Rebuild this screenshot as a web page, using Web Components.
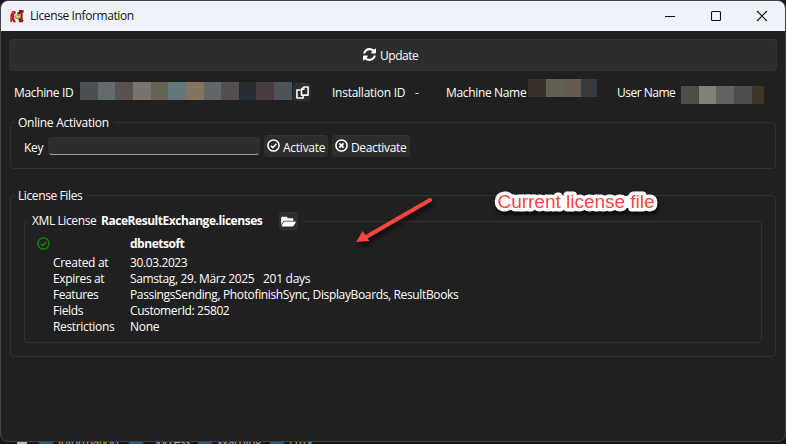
<!DOCTYPE html>
<html lang="en">
<head>
<meta charset="utf-8">
<title>License Information</title>
<style>
html,body{margin:0;padding:0;background:#191617;overflow:hidden}
body{width:786px;height:444px;font:12px/16px "Open Sans","Noto Sans",sans-serif;color:#fff}
</style>
</head>
<body>
<license-app></license-app>
<script>
const define=(name,html,ready)=>{
  const t=document.createElement('template');t.innerHTML=html;
  customElements.define(name,class extends HTMLElement{
    constructor(){super();this.attachShadow({mode:'open'}).append(t.content.cloneNode(true));}
    connectedCallback(){if(ready)ready(this,this.shadowRoot);}
  });
};

/* A label tracked so that it fills the width given in "w". */
define('ui-text',`<style>:host{display:block;flex:none;white-space:nowrap;height:16px;line-height:18px;font-variant-ligatures:none}:host([bold]){font-weight:700}span{display:inline-block}</style><span></span>`,(el,root)=>{
  const s=root.querySelector('span');s.textContent=el.getAttribute('t');
  const w=+el.getAttribute('w');el.style.width=w+'px';
  const n=s.textContent.length;
  s.style.letterSpacing=((w-0.7-s.getBoundingClientRect().width)/n)+'px';
});

const icons={
  refresh:['0 128 1536 1536','<path fill="currentColor" d="M1511 1056q0 5-1 7-64 268-268 434.500t-478 166.500q-146 0-282.500-55t-243.500-157l-129 129q-19 19-45 19t-45-19-19-45v-448q0-26 19-45t45-19h448q26 0 45 19t19 45-19 45l-137 137q71 66 161 102t187 36q134 0 250-65t186-179q11-17 53-117 8-23 30-23h192q13 0 22.500 9.500t9.500 22.500zm25-800v448q0 26-19 45t-45 19h-448q-26 0-45-19t-19-45 19-45l138-138q-148-137-349-137-134 0-250 65t-186 179q-11 17-53 117-8 23-30 23h-199q-13 0-22.500-9.500t-9.500-22.500v-7q65-268 270-434.500t480-166.500q146 0 284 55.500t245 156.500l130-129q19-19 45-19t45 19 19 45z"/>'],
  copy:['0 0 14 14','<g fill="none" stroke="currentColor" stroke-width="1.700" stroke-linejoin="round"><path d="M8.600 1H13v8.800H5.900V3.500z"/><path stroke-width="1.200" d="M8.600 1.400v2.300H6"/><path d="M5 4.300H1v8.700h6.800v-2"/></g>'],
  check:['0 0 14 14','<g fill="none" stroke="currentColor" stroke-width="1.700"><circle cx="7" cy="7" r="6"/><path d="M4.100 7.200l2.100 2.100 3.900-4"/></g>'],
  xmark:['0 0 14 14','<g fill="none" stroke="currentColor" stroke-width="1.700"><circle cx="7" cy="7" r="6"/><path stroke-width="2" d="M4.700 4.700l4.600 4.600M9.300 4.700L4.700 9.300"/></g>'],
  folder:['0 0 576 512','<path fill="currentColor" d="M572.694 292.093L500.270 416.248A63.997 63.997 0 0 1 444.989 448H45.025c-18.523 0-30.064-20.093-20.731-36.093l72.424-124.155A64 64 0 0 1 152 256h399.964c18.523 0 30.064 20.093 20.730 36.093zM152 224h328v-48c0-26.510-21.490-48-48-48H272l-64-64H48C21.490 64 0 85.490 0 112v278.046l69.077-118.418C86.214 242.250 117.989 224 152 224z"/>'],
  app:['0 0 16 16','<path fill="#b51a1c" d="M3 2h3l1 2-2 2v4l2 4H4l-1-2-1 2H1V6z"/><path fill="#df3a35" d="M3 3h2v3H3zM1 8h2v3H1z"/><path fill="#a01116" d="M10 1h5v3h-1v7l1 1-1 2h-4v-3l2-1V5l-2-1z"/><path fill="#3c3526" d="M9 3l3 1-1 2-3-1zM9 11l3-2v2l-2 1z"/><path fill="#8a9440" d="M6 7l3-2 3 1v3l-3 2-3-1z"/><path fill="#e8df6b" d="M7 7h4v2H7z"/>'],
  min:['0 0 12 12','<path stroke="#111" d="M1 6.500h10"/>'],
  max:['0 0 12 12','<rect x="1.500" y="1.500" width="9" height="9" rx="1" fill="none" stroke="#111" stroke-width="1.100"/>'],
  close:['0 0 12 12','<path stroke="#111" stroke-width="1.100" d="M1 1l10 10M11 1L1 11"/>']
};
define('ui-icon',`<style>:host{display:block;flex:none}svg{display:block;width:100%;height:100%}</style><div></div>`,(el,root)=>{
  const [vb,g]=icons[el.getAttribute('name')];
  el.style.width=el.getAttribute('w')+'px';
  const h=el.getAttribute('h')||el.getAttribute('w');
  const d=root.querySelector('div');d.style.height=h+'px';
  d.innerHTML=`<svg viewBox="${vb}">${g}</svg>`;
});

define('ui-button',`<style>:host{display:flex;flex:none;align-items:center;box-sizing:border-box;background:#2d2d2d;border:1px solid #303030;border-top-color:#353535;border-radius:4px}</style><slot></slot>`);

define('ui-group',`<style>:host{display:flex;flex-direction:column;align-items:flex-start;box-sizing:border-box;border:1px solid #323232;border-radius:4px}
.legend{display:flex;background:#202020;margin:var(--up,-9px) 0 0 4px;padding:0 4px 0 3px}</style><div class="legend"><slot name="legend"></slot></div><slot></slot>`);

/* Concealed value: a row of flat colour blocks, "width colour" pairs. */
define('ui-redacted',`<style>:host{display:flex;flex:none;height:18px}i{display:block;height:18px}</style>`,(el,root)=>{
  el.getAttribute('blocks').split(',').forEach(b=>{const [w,c]=b.split(' ');const i=document.createElement('i');i.style.width=w+'px';i.style.background='#'+c;root.append(i);});
});

define('title-bar',`<style>:host{display:flex;align-items:center;height:30px;box-sizing:border-box;background:#eff3f9;color:#151515;padding:0 17px 0 8px}
.t{margin-left:5px;padding-bottom:3px}.c{margin-left:auto;display:flex;gap:34px;padding-bottom:1px}</style>
<ui-icon name="app" w="16" h="15"></ui-icon><ui-text class="t" t="License Information" w="104.500"></ui-text>
<div class="c"><ui-icon name="min" w="12"></ui-icon><ui-icon name="max" w="12"></ui-icon><ui-icon name="close" w="12"></ui-icon></div>`);

define('id-row',`<style>:host{display:flex;height:26px;margin:8px 0 0 5px;align-items:flex-start}
ui-text{margin-top:5px}</style>
<ui-text t="Machine ID" w="60"></ui-text>
<ui-redacted style="margin:3px 0 0 6px" blocks="18 4c5052,17 646a6c,18 5a5250,18 79746e,17 676456,18 64767e,18 847562,17 5e686a,18 544e4f,17 282d33,18 4a3a42,18 4e5357"></ui-redacted>
<ui-button style="width:18px;height:18px;margin:4px 0 0 1px;padding-left:2px"><ui-icon name="copy" w="13"></ui-icon></ui-button>
<ui-text style="margin-left:21px" t="Installation ID" w="74"></ui-text>
<ui-text style="margin-left:9px" t="-" w="5"></ui-text>
<ui-text style="margin-left:26px" t="Machine Name" w="81"></ui-text>
<ui-redacted style="margin-left:1px" blocks="18 38302b,17 626054,18 665b52,16 363b40"></ui-redacted>
<ui-text style="margin-left:20px" t="User Name" w="59"></ui-text>
<ui-redacted style="margin:7px 0 0 5px" blocks="18 514c49,17 7e8277,18 606264,18 504b50,12 41352a"></ui-redacted>`);

define('activation-form',`<style>:host{display:flex;align-items:flex-start;margin:5px 0 0 13px}
.in{width:212px;height:18px;box-sizing:border-box;background:#2d2d2d;border:1px solid #303030;border-bottom-color:#9a9a9a;border-radius:4px;margin:2px 4px 0 4px}
ui-button{height:22px;margin-right:4px;padding-left:2px}ui-icon{margin:0 3px 1px 0}ui-button ui-text{margin-top:2px}</style>
<ui-text style="margin-top:4px" t="Key" w="20"></ui-text><div class="in"></div>
<ui-button style="width:64px"><ui-icon name="check" w="13"></ui-icon><ui-text t="Activate" w="43"></ui-text></ui-button>
<ui-button style="width:78px"><ui-icon name="xmark" w="13"></ui-icon><ui-text t="Deactivate" w="56"></ui-text></ui-button>`);

define('license-details',`<style>:host{display:grid;grid-template-columns:16px 77px auto;grid-template-rows:20px repeat(5,16px);margin:4px 0 0 12px}
.k{grid-column:2}.e{display:flex;gap:8px}</style>
<ui-icon name="check" w="13" style="color:#0d800d;margin-top:3px"></ui-icon><span></span><ui-text bold t="dbnetsoft" w="55" style="margin-top:1px"></ui-text>
<ui-text class="k" t="Created at" w="56"></ui-text><ui-text t="30.03.2023" w="58"></ui-text>
<ui-text class="k" t="Expires at" w="52"></ui-text><div class="e"><ui-text t="Samstag, 29. März 2025" w="125"></ui-text><ui-text t="201 days" w="48"></ui-text></div>
<ui-text class="k" t="Features" w="46"></ui-text><ui-text t="PassingsSending, PhotofinishSync, DisplayBoards, ResultBooks" w="329"></ui-text>
<ui-text class="k" t="Fields" w="31"></ui-text><ui-text t="CustomerId: 25802" w="100"></ui-text>
<ui-text class="k" t="Restrictions" w="62"></ui-text><ui-text t="None" w="30"></ui-text>`);

/* Annotation laid over the window: an arrow and its caption. */
define('callout-layer',`<style>:host{position:absolute;inset:0;pointer-events:none}svg{display:block}text{font:18px "Liberation Sans",Arial,sans-serif}.s{filter:drop-shadow(1px 3px 2px #000b)}.a{filter:drop-shadow(2px 4px 2px #0009)}</style>
<svg width="786" height="444"><g class="a" fill="#ff4242" stroke="#ff4242"><path stroke-width="4" stroke-linecap="round" d="M430 200L366 237"/><path stroke="none" d="M356 242L362.700 231l6.700 10z"/></g>
<g class="s"><path stroke="#fff" stroke-width="12" stroke-linecap="round" d="M505 202h144"/><text x="497.500" y="208" textLength="157" lengthAdjust="spacingAndGlyphs" fill="#ff4242" stroke="#fff" stroke-width="7" stroke-linejoin="round" paint-order="stroke">Current license file</text></g></svg>`);

/* Sliver of the window behind, visible under the dialog's lower edge. */
define('behind-strip',`<style>:host{display:flex;height:2px;overflow:hidden;padding-left:17px;color:#bbb}
i{height:2px;background:#1c608f;flex:none;width:14px}.w{background:#bbb;width:10px;margin-right:12px}ui-text{margin:-9px 10px 0 5px}</style>
<i class="w"></i><i></i><ui-text t="Information" w="61"></ui-text><i></i><ui-text t="Success" w="38" style="margin-left:9px;margin-right:8px"></ui-text><i></i><ui-text t="Warning" w="45" style="margin-right:8px"></ui-text><i></i><ui-text t="Error" w="25"></ui-text>`);

define('license-app',`<style>:host{display:block;position:relative;width:786px;height:444px}
.win{height:442px;box-sizing:border-box;border:1px solid #444243;border-radius:8px;overflow:hidden;background:#202020}
main{display:flex;flex-direction:column;padding:8px 8px 0}
.g1{margin:17px 1px 0;height:47px}.g2{margin:26px 1px 0;height:162px}
.g3{--up:-10px;margin:18px 0 0 13px;width:738px;height:122px}
.lg{display:flex;height:18px}</style>
<div class="win"><title-bar></title-bar><main>
<ui-button style="height:32px;justify-content:center;gap:4px;padding-right:4px"><ui-icon name="refresh" w="13" style="margin-bottom:1px"></ui-icon><ui-text t="Update" w="39"></ui-text></ui-button>
<id-row></id-row>
<ui-group class="g1"><ui-text slot="legend" t="Online Activation" w="91.500"></ui-text><activation-form></activation-form></ui-group>
<ui-group class="g2"><ui-text slot="legend" t="License Files" w="65"></ui-text>
<ui-group class="g3"><div class="lg" slot="legend"><ui-text t="XML License" w="65"></ui-text><ui-text bold style="margin-left:4px" t="RaceResultExchange.licenses" w="162"></ui-text><ui-button style="width:19px;height:18px;margin-left:16px;padding-left:1px"><ui-icon name="folder" w="15" h="13"></ui-icon></ui-button></div><license-details></license-details></ui-group>
</ui-group></main></div><behind-strip></behind-strip><callout-layer></callout-layer>`);
</script>
</body>
</html>
